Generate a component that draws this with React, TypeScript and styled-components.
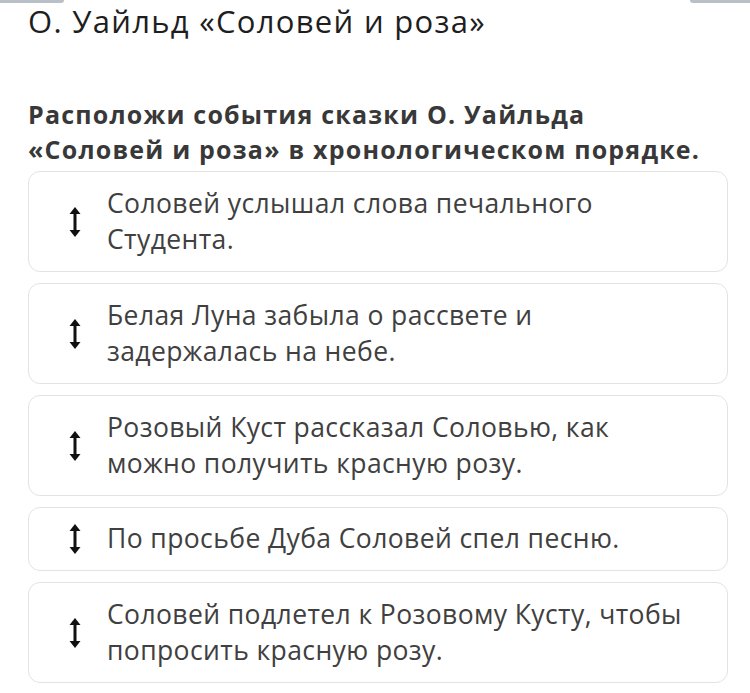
import React from "react";
import styled, { createGlobalStyle } from "styled-components";

const Global = createGlobalStyle`
  html, body { margin: 0; padding: 0; background: #ffffff; }
  body { font-family: "Open Sans", "Noto Sans", sans-serif; }
`;

const Page = styled.div`
  width: 750px;
  height: 693px;
  overflow: hidden;
  position: relative;
  background: #fff;
  box-sizing: border-box;
  padding: 0 22px 0 28px;
`;

const TopEdge = styled.div<{ side: "left" | "right" }>`
  position: absolute;
  top: 0;
  height: 3px;
  background: #b9bfc6;
  ${(p) =>
    p.side === "left"
      ? "left: 0; width: 64px; border-bottom-right-radius: 3px;"
      : "right: 0; width: 60px; border-bottom-left-radius: 3px;"}
`;

const Title = styled.h1`
  margin: 0;
  font-size: 31px;
  line-height: 42px;
  letter-spacing: 1.3px;
  font-weight: 400;
  color: #1e1e1e;
  white-space: nowrap;
`;

const Question = styled.h2`
  margin: 55px 0 0 0;
  font-size: 25px;
  line-height: 35px;
  letter-spacing: 1.2px;
  font-weight: 700;
  color: #383838;
`;

const Line = styled.span`
  display: block;
  white-space: nowrap;
`;

const List = styled.div`
  display: flex;
  flex-direction: column;
  gap: 11px;
  margin-top: 4px;
`;

const Card = styled.div<{ short?: boolean }>`
  display: flex;
  align-items: center;
  gap: 26px;
  box-sizing: border-box;
  height: ${(p) => (p.short ? "64px" : "101px")};
  padding: 0 20px 2px 40px;
  border: 1px solid #e3e3e3;
  border-radius: 12px;
  background: #fff;
`;

const Handle = styled.div`
  flex: none;
  width: 12px;
  display: flex;
  justify-content: center;
  padding-top: 2px;
`;

const CardText = styled.div`
  font-size: 26.5px;
  line-height: 36px;
  letter-spacing: 0.4px;
  color: #404040;
`;

const ArrowIcon = () => (
  <svg width="12" height="30" viewBox="0 0 12 30">
    <polygon points="6,0 11.5,7 0.5,7" fill="#111" />
    <polygon points="6,30 11.5,23 0.5,23" fill="#111" />
    <rect x="4.5" y="5" width="3" height="20" fill="#111" />
  </svg>
);

const items: { lines: string[]; short?: boolean }[] = [
  { lines: ["Соловей услышал слова печального", "Студента."] },
  { lines: ["Белая Луна забыла о рассвете и", "задержалась на небе."] },
  { lines: ["Розовый Куст рассказал Соловью, как", "можно получить красную розу."] },
  { lines: ["По просьбе Дуба Соловей спел песню."], short: true },
  { lines: ["Соловей подлетел к Розовому Кусту, чтобы", "попросить красную розу."] },
];

export default function App() {
  return (
    <Page>
      <Global />
      <TopEdge side="left" />
      <TopEdge side="right" />
      <Title>О. Уайльд «Соловей и роза»</Title>
      <Question>
        <Line>Расположи события сказки О. Уайльда</Line>
        <Line>«Соловей и роза» в хронологическом порядке.</Line>
      </Question>
      <List>
        {items.map((it, i) => (
          <Card key={i} short={it.short}>
            <Handle>
              <ArrowIcon />
            </Handle>
            <CardText>
              {it.lines.map((l, j) => (
                <Line key={j}>{l}</Line>
              ))}
            </CardText>
          </Card>
        ))}
      </List>
    </Page>
  );
}
